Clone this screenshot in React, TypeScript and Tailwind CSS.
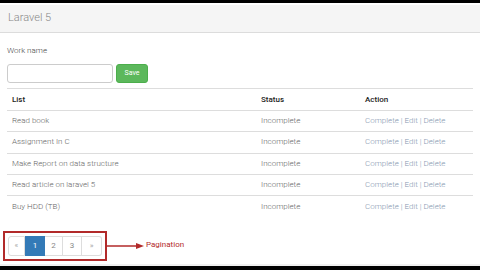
import React from "react";

const rows = [
  "Read book",
  "Assignment In C",
  "Make Report on data structure",
  "Read article on laravel 5",
  "Buy HDD (TB)",
];

export default function App() {
  return (
    <div className="flex h-[270px] w-[480px] flex-col overflow-hidden bg-white font-['Roboto',sans-serif] font-light text-[#555]">
      <div className="h-[3px] bg-black" />
      <div className="h-[2px] bg-white" />
      <div className="flex h-[28px] items-center border-b border-[#dcdcdc] bg-[#f5f5f5] px-[8px]">
        <span className="text-[11px] font-light text-[#888]">Laravel 5</span>
      </div>

      <div className="flex flex-1 flex-col px-[7px]">
        <div className="mt-[12px] text-[8px] text-[#444]">Work name</div>
        <div className="mt-[7px] flex gap-[3px]">
          <input className="h-[19px] w-[106px] rounded-[3px] border border-[#ccc] bg-white" />
          <button className="h-[19px] w-[32px] rounded-[3px] border border-[#4cae4c] bg-[#5cb85c] text-[7px] font-normal text-white">
            Save
          </button>
        </div>

        <table className="mt-[5px] w-full border-collapse text-left text-[8px]">
          <thead>
            <tr className="h-[22px] border-t border-b border-[#ddd]">
              <th className="w-[249px] pl-[5px] font-medium text-[#222]">List</th>
              <th className="w-[104px] pl-[5px] font-medium text-[#222]">Status</th>
              <th className="pl-[5px] font-medium text-[#222]">Action</th>
            </tr>
          </thead>
          <tbody>
            {rows.map((r, i) => (
              <tr key={r} className={`h-[21.3px] ${i < rows.length - 1 ? "border-b border-[#ddd]" : ""}`}>
                <td className="pl-[5px] text-[#666]">{r}</td>
                <td className="pl-[5px] text-[#666]">Incomplete</td>
                <td className="pl-[5px] text-[#8597b0]">
                  Complete | Edit | Delete
                </td>
              </tr>
            ))}
          </tbody>
        </table>

        <div className="mt-auto mb-[3px] flex items-center">
          <div className="-ml-[4px] border-2 border-[#b22a2a] p-[3px]">
            <div className="flex h-[20px] text-[8px] font-normal">
              <span className="flex w-[17px] items-center justify-center rounded-l-[3px] border border-[#ddd] text-[#aaa]">«</span>
              <span className="flex w-[20px] items-center justify-center border border-[#337ab7] bg-[#337ab7] text-white">1</span>
              <span className="flex w-[18px] items-center justify-center border border-l-0 border-[#ddd] text-[#888]">2</span>
              <span className="flex w-[19px] items-center justify-center border border-l-0 border-[#ddd] text-[#888]">3</span>
              <span className="flex w-[20px] items-center justify-center rounded-r-[3px] border border-l-0 border-[#ddd] text-[#aaa]">»</span>
            </div>
          </div>
          <svg width="38" height="8" viewBox="0 0 38 8" className="-ml-[1px]">
            <line x1="0" y1="4" x2="31" y2="4" stroke="#b22a2a" strokeWidth="1.5" />
            <polygon points="30,1 38,4 30,7" fill="#b22a2a" />
          </svg>
          <span className="ml-[2px] -mt-[3px] text-[8px] font-normal text-[#b22a2a]">Pagination</span>
        </div>
      </div>
      <div className="h-[2px] bg-[#f0f0f0]" />
      <div className="h-[4px] bg-black" />
    </div>
  );
}
